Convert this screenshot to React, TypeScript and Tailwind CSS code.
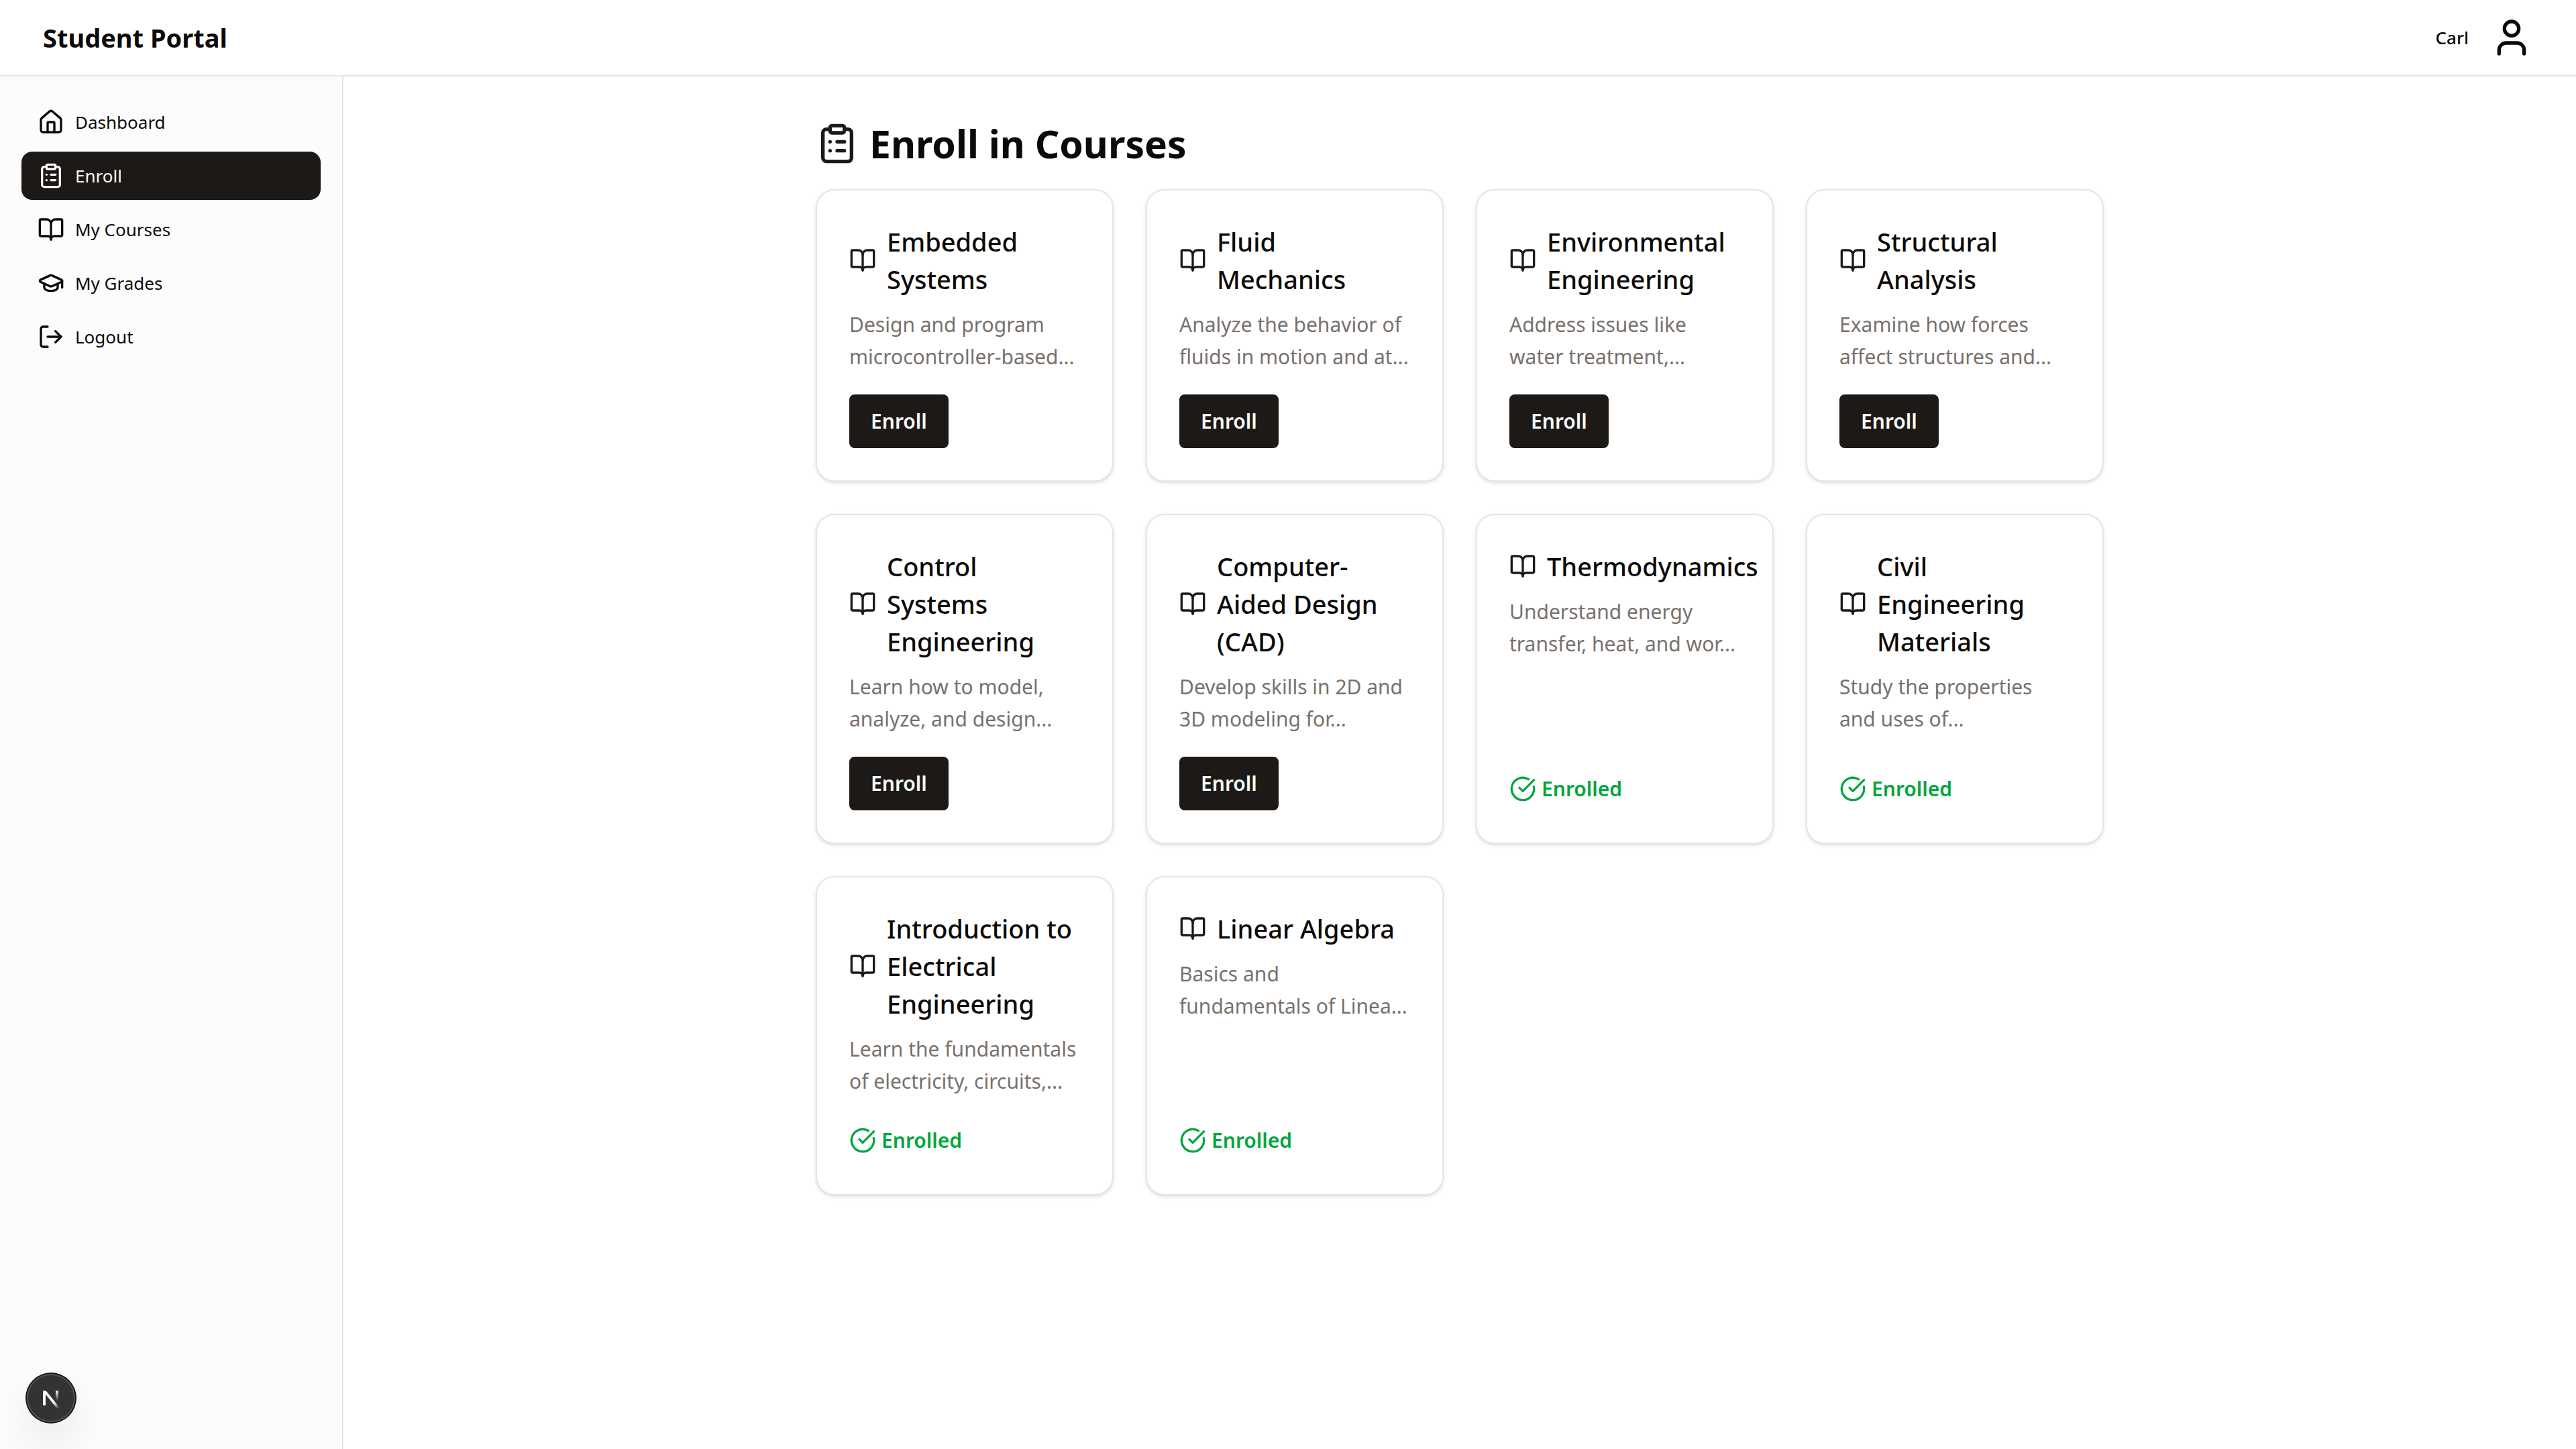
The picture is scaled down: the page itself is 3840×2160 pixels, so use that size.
import {
  BookOpen,
  CircleCheckBig,
  ClipboardList,
  GraduationCap,
  House,
  LogOut,
  User,
  type LucideIcon,
} from "lucide-react";

type NavItem = { label: string; icon: LucideIcon; active?: boolean };

const navItems: NavItem[] = [
  { label: "Dashboard", icon: House },
  { label: "Enroll", icon: ClipboardList, active: true },
  { label: "My Courses", icon: BookOpen },
  { label: "My Grades", icon: GraduationCap },
  { label: "Logout", icon: LogOut },
];

type Course = { title: string; lines: [string, string]; enrolled?: boolean };

const courses: Course[] = [
  { title: "Embedded Systems", lines: ["Design and program", "microcontroller-based..."] },
  { title: "Fluid Mechanics", lines: ["Analyze the behavior of", "fluids in motion and at..."] },
  { title: "Environmental Engineering", lines: ["Address issues like", "water treatment,..."] },
  { title: "Structural Analysis", lines: ["Examine how forces", "affect structures and..."] },
  { title: "Control Systems Engineering", lines: ["Learn how to model,", "analyze, and design..."] },
  { title: "Computer-Aided Design (CAD)", lines: ["Develop skills in 2D and", "3D modeling for..."] },
  { title: "Thermodynamics", lines: ["Understand energy", "transfer, heat, and wor..."], enrolled: true },
  { title: "Civil Engineering Materials", lines: ["Study the properties", "and uses of..."], enrolled: true },
  {
    title: "Introduction to Electrical Engineering",
    lines: ["Learn the fundamentals", "of electricity, circuits,..."],
    enrolled: true,
  },
  { title: "Linear Algebra", lines: ["Basics and", "fundamentals of Linea..."], enrolled: true },
];

function Header() {
  return (
    <header className="flex h-[114px] items-center justify-between border-b-2 border-[#e5e5e5] px-16">
      <p className="text-[38px] leading-14 font-bold">Student Portal</p>
      <div className="flex items-center gap-8">
        <span className="text-[26px] leading-10 font-medium">Carl</span>
        <User className="size-16" />
      </div>
    </header>
  );
}

function Sidebar() {
  return (
    <aside className="w-128 shrink-0 border-r-2 border-[#e5e5e5] bg-[#fcfcfc] p-8">
      <nav className="flex flex-col gap-2">
        {navItems.map(({ label, icon: Icon, active }) => (
          <a
            key={label}
            href="#"
            className={
              active
                ? "flex h-18 items-center gap-4 rounded-2xl bg-[#1c1917] px-6 text-[#fafaf9]"
                : "flex h-18 items-center gap-4 rounded-2xl px-6"
            }
          >
            <Icon className="size-10" />
            <span className="text-[26px] leading-10">{label}</span>
          </a>
        ))}
      </nav>
    </aside>
  );
}

function CourseCard({ title, lines, enrolled }: Course) {
  return (
    <article className="flex flex-col justify-between gap-8 rounded-[28px] border-2 border-[#e5e5e5] bg-white p-12 shadow-[0_2px_6px_rgba(0,0,0,0.1),0_2px_4px_-2px_rgba(0,0,0,0.1)]">
      <div>
        <h2 className="mb-4 flex items-center gap-4 text-[38px] leading-14 font-medium">
          <BookOpen className="size-10 shrink-0 text-[#1c1917]" />
          <span>{title}</span>
        </h2>
        <p className="text-[30px] leading-12 whitespace-nowrap text-[#78716c]">
          {lines[0]}
          <br />
          {lines[1]}
        </p>
      </div>
      {enrolled ? (
        <p className="flex h-16 items-center gap-2 text-[30px] leading-12 font-semibold text-[#00a63e]">
          <CircleCheckBig className="size-10" />
          Enrolled
        </p>
      ) : (
        <button
          type="button"
          className="h-20 self-start rounded-lg bg-[#1c1917] px-8 text-[30px] leading-12 font-semibold text-[#fafaf9]"
        >
          Enroll
        </button>
      )}
    </article>
  );
}

function DevBadge() {
  return (
    <button
      type="button"
      aria-label="Open developer tools"
      className="fixed bottom-10 left-10 flex size-18 items-center justify-center rounded-full bg-[#333333] shadow-[0_0_0_2px_#171717,inset_0_0_0_2px_#525252,0_32px_64px_-16px_rgba(0,0,0,0.24)]"
    >
      <svg viewBox="0 0 72 72" className="size-18" fill="none" aria-hidden="true">
        <defs>
          <linearGradient id="badge-diagonal" x1="40" y1="43" x2="47" y2="52" gradientUnits="userSpaceOnUse">
            <stop stopColor="white" />
            <stop offset="1" stopColor="white" stopOpacity="0" />
          </linearGradient>
          <linearGradient id="badge-stem" x1="45" y1="25" x2="45" y2="40" gradientUnits="userSpaceOnUse">
            <stop stopColor="white" />
            <stop offset="1" stopColor="white" stopOpacity="0" />
          </linearGradient>
        </defs>
        <path d="M24 25h4.500L49 50.400L46 53L28 30.500V47H24Z" fill="url(#badge-diagonal)" />
        <rect x="43" y="25" width="4" height="16" fill="url(#badge-stem)" />
      </svg>
    </button>
  );
}

export default function App() {
  return (
    <div className="flex min-h-screen flex-col bg-white font-['Noto_Sans',sans-serif] text-[#0c0a09]">
      <Header />
      <div className="flex grow">
        <Sidebar />
        <main className="grow p-16">
          <div className="mx-auto max-w-[1920px]">
            <h1 className="mb-8 flex items-center gap-4 text-[57px] leading-18 font-bold">
              <ClipboardList className="size-16 text-[#1c1917]" />
              Enroll in Courses
            </h1>
            <div className="grid grid-cols-4 gap-12">
              {courses.map((course) => (
                <CourseCard key={course.title} {...course} />
              ))}
            </div>
          </div>
        </main>
      </div>
      <DevBadge />
    </div>
  );
}
